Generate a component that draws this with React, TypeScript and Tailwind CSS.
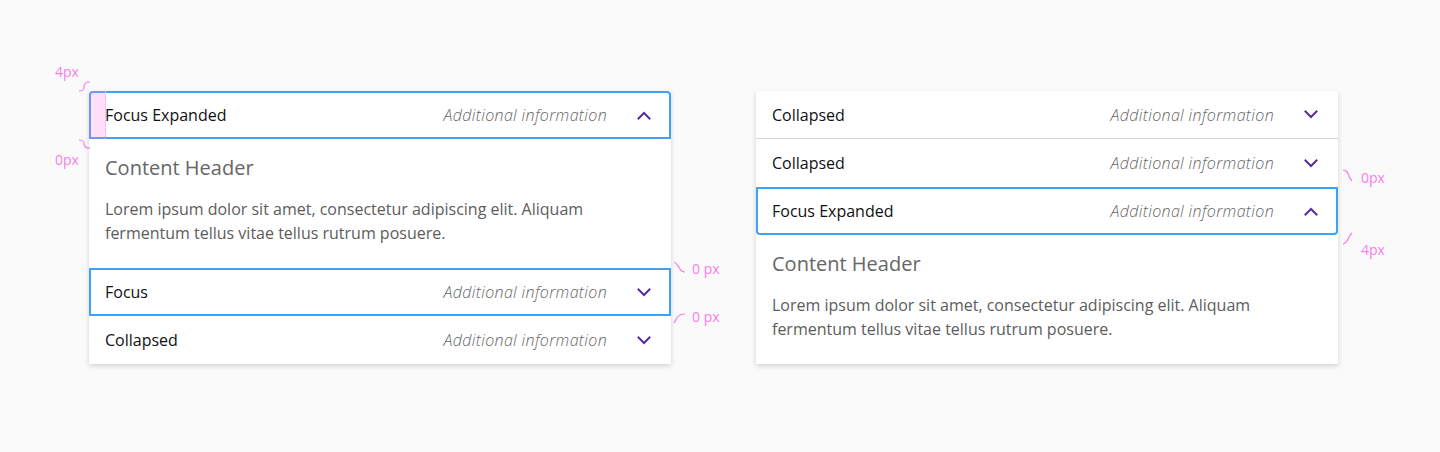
import React from "react";

const font = { fontFamily: '"Open Sans", "Noto Sans", sans-serif' };

function Chevron({ up }: { up?: boolean }) {
  return (
    <svg width="14" height="9" viewBox="0 0 14 9" className="block">
      <path
        d={up ? "M1.5 7.5 L7 2 L12.5 7.5" : "M1.5 1.5 L7 7 L12.5 1.5"}
        fill="none"
        stroke="#5a2ca0"
        strokeWidth="2"
        strokeLinecap="square"
      />
    </svg>
  );
}

function RowInner({ title, up }: { title: string; up?: boolean }) {
  return (
    <>
      <span className="text-[16px] text-[#111]">{title}</span>
      <div className="ml-auto flex items-center">
        <span className="text-[16px] italic font-light text-[#666] tracking-[0.35px]">Additional information</span>
        <span className="ml-[30px] mr-[4px] flex items-center">
          <Chevron up={up} />
        </span>
      </div>
    </>
  );
}

function FocusRow({ title, up, className }: { title: string; up?: boolean; className: string }) {
  return (
    <div className={"relative h-12 flex items-center pl-[14px] pr-[14px] border-2 border-[#3ea2f5] " + className}>
      <RowInner title={title} up={up} />
    </div>
  );
}

function PlainRow({ title, divider }: { title: string; divider?: boolean }) {
  return (
    <div className={"h-12 flex items-center pl-[16px] pr-[16px] " + (divider ? "border-b border-[#d6d6d6]" : "")}>
      <RowInner title={title} />
    </div>
  );
}

function Content() {
  return (
    <div className="pl-[16px] pr-[16px] pt-[15px] pb-[23px]">
      <div className="text-[20px] leading-[28px] text-[#666]">Content Header</div>
      <p className="mt-[15px] text-[16px] leading-[24px] text-[#5c5c5c]">
        Lorem ipsum dolor sit amet, consectetur adipiscing elit. Aliquam
        <br />
        fermentum tellus vitae tellus rutrum posuere.
      </p>
    </div>
  );
}

function Note({ text, className }: { text: string; className: string }) {
  return <span className={"absolute text-[14px] leading-none text-[#f77ee9] " + className}>{text}</span>;
}

function Squiggle({ className, d }: { className: string; d: string }) {
  return (
    <svg width="14" height="14" viewBox="0 0 14 14" className={"absolute " + className}>
      <path d={d} fill="none" stroke="#f77ee9" strokeWidth="1.2" />
    </svg>
  );
}

export default function App() {
  return (
    <div className="w-[1440px] h-[452px] bg-[#fafafa] relative" style={font}>
      <div className="flex gap-[85px] pt-[91px] pl-[89px]">
        {/* Left card */}
        <div className="w-[582px] bg-white shadow-[0_2px_5px_rgba(0,0,0,0.16)] relative">
          <FocusRow title="Focus Expanded" up className="rounded-t-[4px]" />
          <Content />
          <FocusRow title="Focus" className="" />
          <PlainRow title="Collapsed" />
          <div className="absolute left-0 top-0 w-[17px] h-12 bg-[#ff80ec]/25 border-r border-dotted border-[#f59aec]" />
        </div>
        {/* Right card */}
        <div className="w-[582px] bg-white shadow-[0_2px_5px_rgba(0,0,0,0.16)]">
          <PlainRow title="Collapsed" divider />
          <PlainRow title="Collapsed" />
          <FocusRow title="Focus Expanded" up className="rounded-b-[4px]" />
          <Content />
        </div>
      </div>

      {/* annotations */}
      <Note text="4px" className="left-[55px] top-[65px]" />
      <Squiggle className="left-[78px] top-[79px]" d="M1 12 C5 12, 6 11, 6 8 C6 4, 8 3, 12 3" />
      <Note text="0px" className="left-[55px] top-[153px]" />
      <Squiggle className="left-[78px] top-[137px]" d="M12 11 C8 11, 6 10, 6 7 C6 4, 5 3, 1 3" />

      <Note text="0 px" className="left-[692px] top-[262px]" />
      <Squiggle className="left-[672px] top-[260px]" d="M2 2 C5 3, 6 6, 8 9 C9 11, 11 12, 13 12" />
      <Note text="0 px" className="left-[692px] top-[310px]" />
      <Squiggle className="left-[672px] top-[310px]" d="M2 13 C4 10, 5 6, 8 5 C10 4, 12 4, 13 4" />

      <Note text="0px" className="left-[1361px] top-[171px]" />
      <Squiggle className="left-[1341px] top-[168px]" d="M2 2 C6 2, 7 5, 8 8 C9 11, 10 12, 11 13" />
      <Note text="4px" className="left-[1361px] top-[243px]" />
      <Squiggle className="left-[1341px] top-[231px]" d="M2 13 C6 12, 7 9, 8 6 C9 4, 10 3, 11 2" />
    </div>
  );
}
